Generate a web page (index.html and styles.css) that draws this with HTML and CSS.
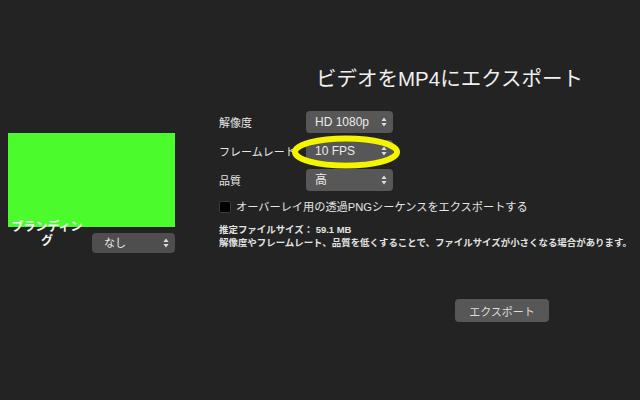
FILE: index.html
```html
<!DOCTYPE html>
<html lang="ja">
<head>
<meta charset="utf-8">
<link rel="stylesheet" href="styles.css">
</head>
<body>
<div class="page">
  <div class="left">
    <div class="preview"></div>
    <div class="brand-row">
      <div class="brand-label">ブランディング</div>
      <div class="select small">なし<svg class="arrows" width="6" height="10" viewBox="0 0 6 10"><path d="M3 0.5L5.6 4H0.4Z M3 9.5L5.6 6H0.4Z" fill="#ddd"/></svg></div>
    </div>
  </div>
  <div class="right">
    <h1 class="title">ビデオをMP4にエクスポート</h1>
    <div class="form">
      <div class="label">解像度</div>
      <div class="select">HD 1080p<svg class="arrows" width="6" height="10" viewBox="0 0 6 10"><path d="M3 0.5L5.6 4H0.4Z M3 9.5L5.6 6H0.4Z" fill="#ddd"/></svg></div>
      <div class="label">フレームレート</div>
      <div class="select">10 FPS<svg class="arrows" width="6" height="10" viewBox="0 0 6 10"><path d="M3 0.5L5.6 4H0.4Z M3 9.5L5.6 6H0.4Z" fill="#ddd"/></svg></div>
      <div class="label">品質</div>
      <div class="select">高<svg class="arrows" width="6" height="10" viewBox="0 0 6 10"><path d="M3 0.5L5.6 4H0.4Z M3 9.5L5.6 6H0.4Z" fill="#ddd"/></svg></div>
    </div>
    <div class="check-row"><span class="checkbox"></span>オーバーレイ用の透過PNGシーケンスをエクスポートする</div>
    <div class="info">
      <div>推定ファイルサイズ： 59.1 MB</div>
      <div>解像度やフレームレート、品質を低くすることで、ファイルサイズが小さくなる場合があります。</div>
    </div>
    <div class="actions"><button class="export">エクスポート</button></div>
  </div>
</div>
<svg class="highlight" width="120" height="44" viewBox="0 0 120 44"><path d="M1 19 L6 17" stroke="#f5f500" stroke-width="1.2" fill="none"/><ellipse cx="56" cy="21" rx="51" ry="13.5" stroke="#f5f500" stroke-width="6" fill="none"/></svg>
</body>
</html>
```
FILE: styles.css
```css
* { box-sizing: border-box; }
html, body { margin: 0; padding: 0; }
body {
  background: #232323;
  width: 640px;
  height: 400px;
  overflow: hidden;
  font-family: "Liberation Sans", "Noto Sans CJK JP", sans-serif;
  color: #e6e6e6;
  position: relative;
}
.page {
  display: flex;
  padding-left: 8px;
}
.left {
  width: 167px;
  padding-top: 133px;
  display: flex;
  flex-direction: column;
}
.preview {
  width: 167px;
  height: 94px;
  background: #4cfb2c;
}
.brand-row {
  display: flex;
  align-items: flex-start;
  margin-top: -7px;
}
.brand-label {
  width: 78px;
  text-align: center;
  font-size: 12px;
  line-height: 14px;
  font-weight: 700;
  color: #f4f4f4;
}
.select {
  position: relative;
  width: 87px;
  height: 22px;
  background: #575757;
  border-radius: 4px;
  font-size: 12px;
  line-height: 22px;
  padding-left: 9px;
  color: #ececec;
}
.select.small {
  width: 83px;
  height: 20px;
  line-height: 20px;
  margin-left: auto;
  margin-top: 13px;
  background: #4e4e4e;
  padding-left: 12px;
  font-size: 11px;
}
.arrows {
  position: absolute;
  right: 6px;
  top: 50%;
  margin-top: -5px;
}
.right {
  padding-left: 44px;
  display: flex;
  flex-direction: column;
  width: 465px;
}
.title {
  margin: 65px 0 0 97px;
  font-size: 20.5px;
  line-height: 28px;
  font-weight: 400;
  color: #f0f0f0;
  white-space: nowrap;
}
.form {
  margin-top: 18px;
  display: grid;
  grid-template-columns: 87px 87px;
  row-gap: 7px;
  align-items: center;
}
.label {
  font-size: 11px;
  color: #e6e6e6;
}
.check-row {
  margin-top: 9px;
  display: flex;
  align-items: center;
  font-size: 11.2px;
  line-height: 14px;
  color: #e6e6e6;
  white-space: nowrap;
}
.checkbox {
  width: 12px;
  height: 12px;
  background: #000;
  border: 1px solid #3c3c3c;
  border-radius: 2px;
  margin-right: 5px;
}
.info {
  margin-top: 9px;
  font-size: 9.45px;
  line-height: 13px;
  font-weight: 700;
  color: #e2e2e2;
  white-space: nowrap;
}
.actions {
  margin-top: 50px;
  padding-left: 236px;
}
.export {
  width: 94px;
  height: 23px;
  background: #575757;
  border: 0;
  border-radius: 4px;
  color: #dcdcdc;
  font-family: inherit;
  font-size: 11px;
  padding: 0;
}
.highlight {
  position: absolute;
  left: 290px;
  top: 131px;
}
```
